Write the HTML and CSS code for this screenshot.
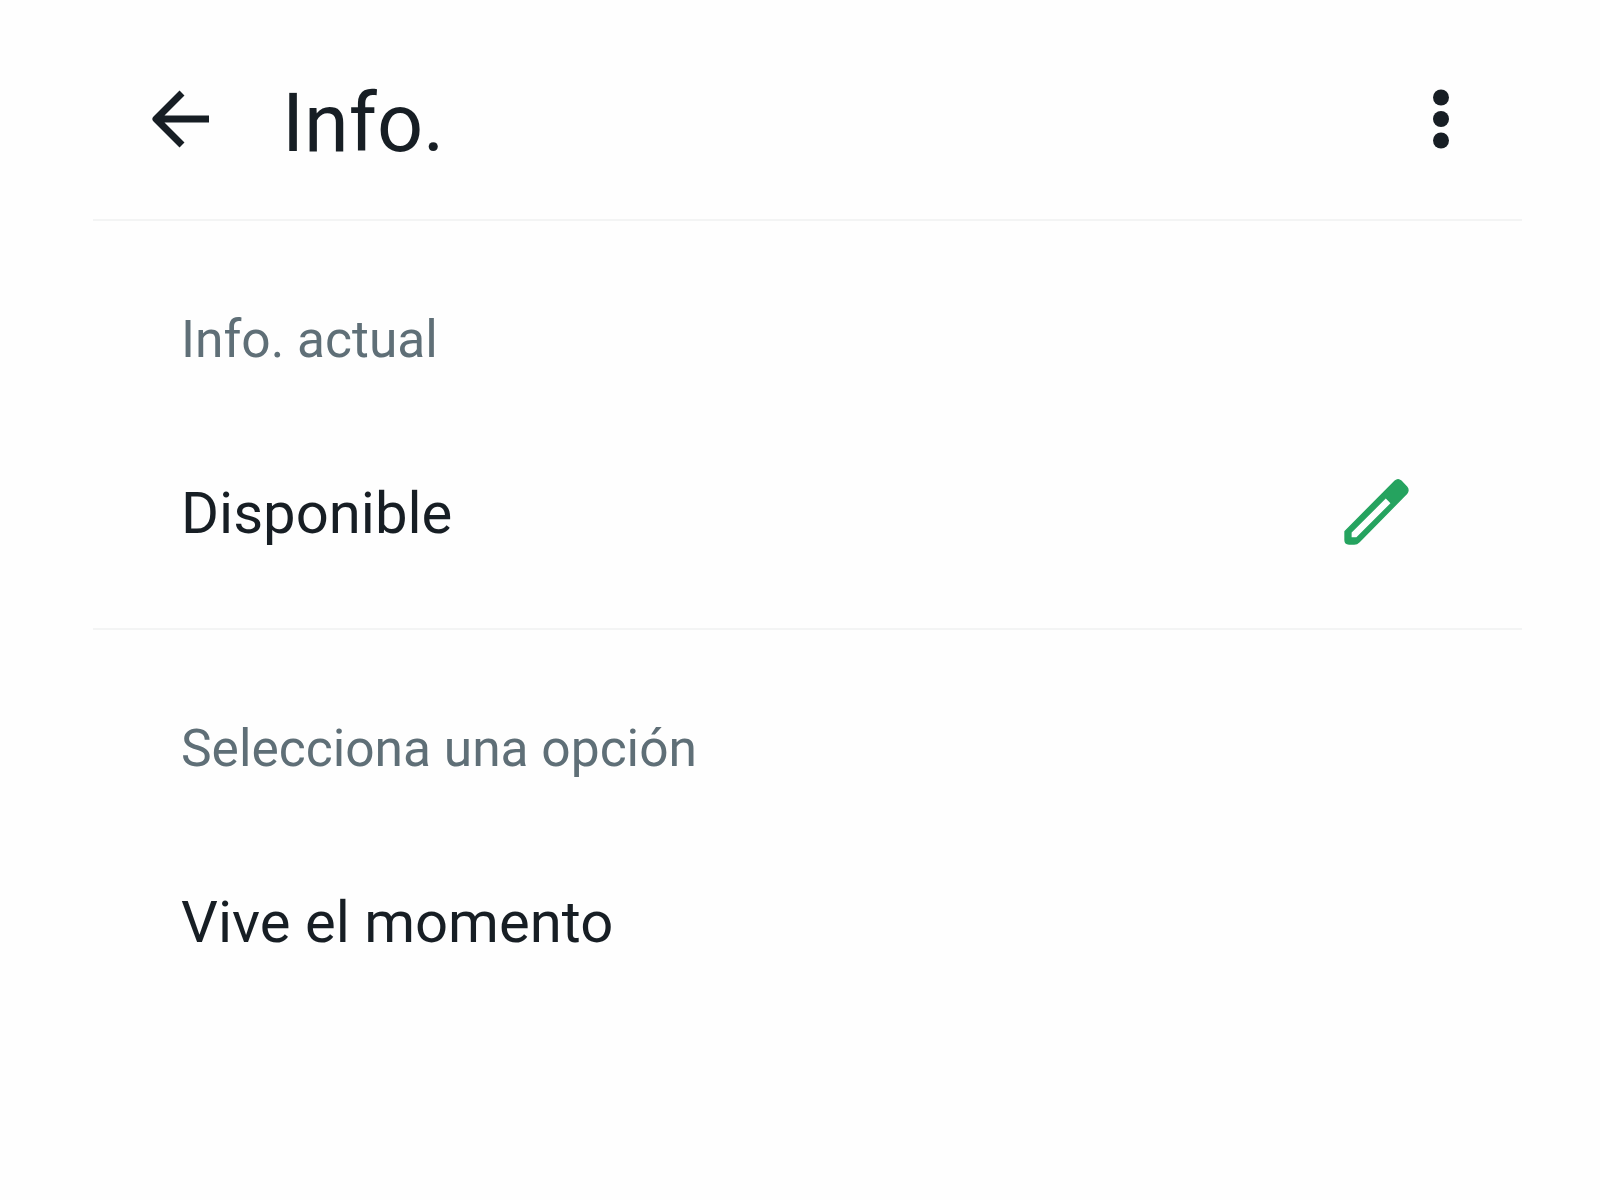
FILE: index.html
```html
<!DOCTYPE html>
<html lang="es">
<head>
<meta charset="utf-8">
<title>Info.</title>
<link rel="stylesheet" href="styles.css">
</head>
<body>
<main class="screen">
  <header class="appbar">
    <svg class="back" viewBox="0 0 60 60" aria-hidden="true"><path d="M58 30H6M31 4 5 30l26 26" /></svg>
    <h1 class="title">Info.</h1>
    <svg class="more" viewBox="0 0 18 62" aria-hidden="true"><circle cx="9" cy="9.5" r="8"/><circle cx="9" cy="31" r="8"/><circle cx="9" cy="52.5" r="8"/></svg>
  </header>
  <section class="section">
    <h2 class="label">Info. actual</h2>
    <div class="row">
      <span class="value">Disponible</span>
      <svg class="pencil" viewBox="155 80 205 205" aria-hidden="true">
        <path class="pencil-shape" d="M164 244 315 92Q324 84 333 92L350 110Q358 120 350 130L207 275Q200 282 192 282H176Q164 282 164 270ZM182 264H199L304 159 287 142 182 247Z"/>
      </svg>
    </div>
  </section>
  <section class="section">
    <h2 class="label">Selecciona una opción</h2>
    <div class="row">
      <span class="value">Vive el momento</span>
    </div>
  </section>
</main>
</body>
</html>
```
FILE: styles.css
```css
* { box-sizing: border-box; }
html, body { margin: 0; background: #fff; }
body { font-family: Roboto, "Liberation Sans", sans-serif; }
.screen { width: 1600px; height: 1200px; padding: 0 78px 0 93px; background: #fefefe; }
.appbar {
  height: 221px;
  display: flex;
  align-items: center;
  border-bottom: 2px solid #f3f4f4;
  padding: 0 0 0 58px;
}
.back { width: 60px; height: 60px; fill: none; stroke: #171e24; stroke-width: 7; stroke-linejoin: round; flex: none; margin-top: 18px; }
.title { margin: 28px 0 0 71px; font-size: 81px; font-weight: 400; line-height: 1; color: #171e24; flex: 1; }
.more { width: 18px; height: 62px; fill: #171e24; flex: none; margin: 18px 72px 0 0; }
.section { height: 409px; padding: 87px 0 0 88px; border-bottom: 2px solid #f3f4f4; }
.section:last-child { border-bottom: 0; }
.label { margin: 0; font-size: 51.5px; font-weight: 400; line-height: 64px; color: #5f6f77; }
.row { display: flex; align-items: center; justify-content: space-between; margin-top: 108px; height: 66px; padding-right: 112px; }
.value { font-size: 58px; line-height: 66px; color: #171e24; }
.pencil { width: 68px; height: 68px; flex: none; margin-top: -5px; }
.pencil-shape { fill: #25a35f; fill-rule: evenodd; stroke: #25a35f; stroke-width: 4; stroke-linejoin: round; }
```
